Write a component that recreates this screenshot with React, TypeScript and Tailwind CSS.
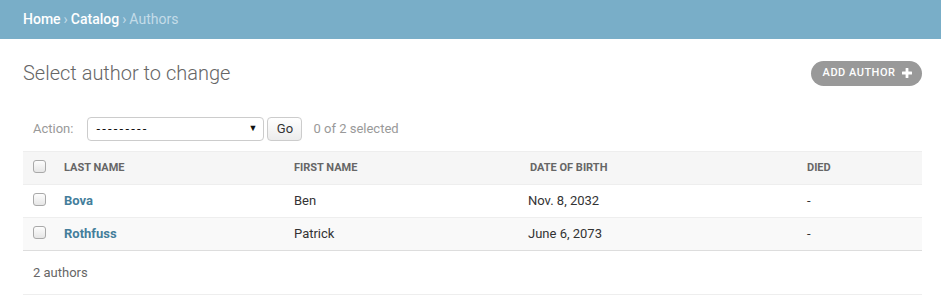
import React from "react";

const rows = [
  { last: "Bova", first: "Ben", dob: "Nov. 8, 2032", died: "-" },
  { last: "Rothfuss", first: "Patrick", dob: "June 6, 2073", died: "-" },
];

function Checkbox() {
  return (
    <span className="inline-block w-[13px] h-[13px] rounded-[3px] border border-[#a9a9a9] bg-gradient-to-b from-[#fdfdfd] to-[#e6e6e6]" />
  );
}

const cols = "grid grid-cols-[33px_230px_236px_277px_1fr] items-center";

export default function App() {
  return (
    <div className="w-[941px] h-[302px] bg-white text-[#333] overflow-hidden" style={{ fontFamily: "Roboto, 'Lucida Grande', Verdana, Arial, sans-serif" }}>
      <div className="h-[39px] bg-[#79aec8] flex items-center px-[23px] text-[14px] text-[#c4dce8]">
        <span className="text-white font-medium">Home</span>
        <span className="mx-[3px]">›</span>
        <span className="text-white font-medium">Catalog</span>
        <span className="mx-[3px]">›</span>
        <span>Authors</span>
      </div>
      <div className="pl-[23px] pr-[19px]">
        <div className="flex items-center justify-between h-[68px]">
          <h1 className="text-[20px] font-light text-[#666]">Select author to change</h1>
          <div className="h-[25px] w-[111px] rounded-[15px] bg-[#999] flex items-center justify-center gap-[7px] text-white text-[11px] font-medium tracking-[0.5px] pl-[2px]">
            <span>ADD AUTHOR</span>
            <svg width="10" height="10" viewBox="0 0 10 10">
              <rect x="3.6" y="0" width="2.8" height="10" fill="#fff" rx="0.5" />
              <rect x="0" y="3.6" width="10" height="2.8" fill="#fff" rx="0.5" />
            </svg>
          </div>
        </div>
        <div className="h-[43px] flex items-center pl-[10px] text-[13px] pt-[1px]">
          <span className="text-[#999] mr-[14px]">Action:</span>
          <div className="w-[177px] h-[24px] border border-[#ccc] rounded-[4px] flex items-center justify-between pl-[8px] pr-[6px] text-[#111]">
            <span className="text-[13px] tracking-[2.2px]">---------</span>
            <span className="text-[9px]">▼</span>
          </div>
          <div className="ml-[3px] w-[35px] h-[24px] border border-[#ccc] rounded-[4px] bg-gradient-to-b from-white to-[#ececec] flex items-center justify-center text-[#333]">
            Go
          </div>
          <span className="ml-[11px] text-[#999] mb-[1px]">0 of 2 selected</span>
        </div>
        <div className="border-t border-[#eee] mt-[1px]">
          <div className={`${cols} h-[33px] bg-[#f6f6f6] border-b border-[#eee] text-[11px] font-bold text-[#666]`}>
            <div className="pl-[10px] mb-[3px] flex"><Checkbox /></div>
            <div className="pl-[8px]">LAST NAME</div>
            <div className="pl-[8px]">FIRST NAME</div>
            <div className="pl-[8px]">DATE OF BIRTH</div>
            <div className="pl-[8px]">DIED</div>
          </div>
          {rows.map((r, i) => (
            <div key={r.last} className={`${cols} h-[33px] text-[13px] ${i === 1 ? "bg-[#f9f9f9] border-b border-[#ddd]" : "bg-white border-b border-[#eee]"}`}>
              <div className="pl-[10px] mb-[3px] flex"><Checkbox /></div>
              <div className="pl-[8px] font-bold text-[#447e9b]">{r.last}</div>
              <div className="pl-[8px]">{r.first}</div>
              <div className="pl-[6px]">{r.dob}</div>
              <div className="pl-[8px]">{r.died}</div>
            </div>
          ))}
        </div>
        <div className="h-[44px] flex items-center pl-[10px] text-[13px] text-[#666] border-b border-[#eee] pt-[1px]">
          2 authors
        </div>
      </div>
    </div>
  );
}
